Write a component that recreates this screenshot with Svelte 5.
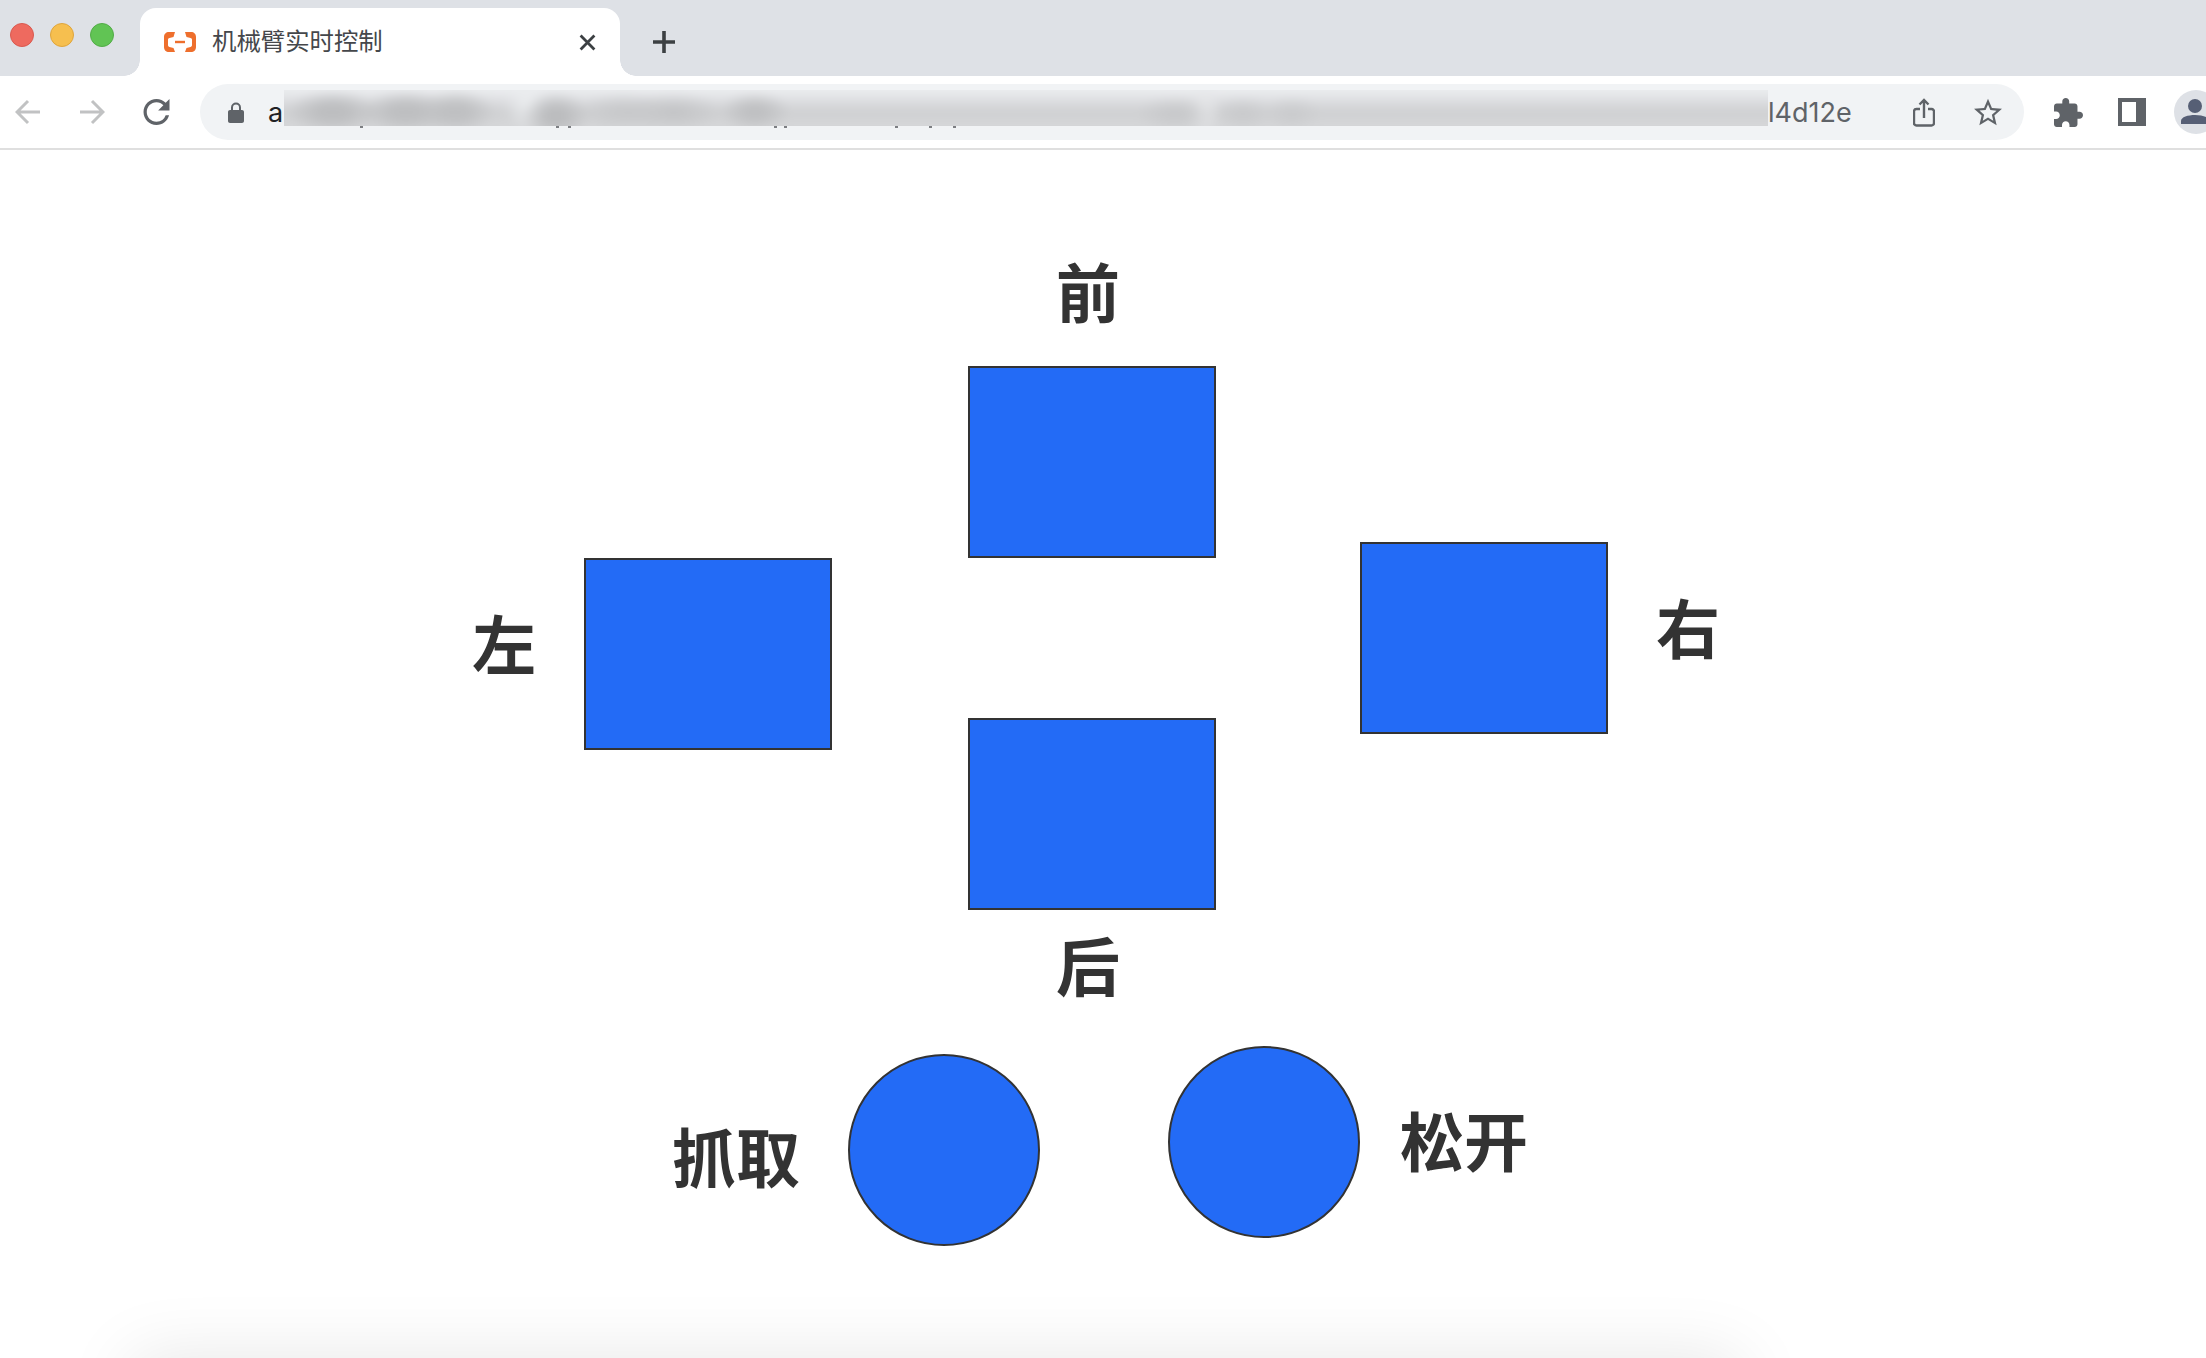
<script>
	// bits of the hidden url that stick out under the blurred strip
	const descenders = [76, 272, 284, 490, 500, 611, 645, 669];
</script>

<div class="page">
	<header class="tabstrip">
		<div class="dots">
			<span class="dot red"></span>
			<span class="dot yellow"></span>
			<span class="dot green"></span>
		</div>
		<div class="tab">
			<svg class="favicon" viewBox="0 0 32 20" aria-hidden="true">
				<path d="M11 0H5C2 0 0 2 0 5v10c0 3 2 5 5 5h6l-1.500-4-4-1c-.8-.2-1.500-.8-1.500-1.700V7.700C4 6.800 4.700 6.200 5.500 6l4-1z" />
				<path d="M21 0h6c3 0 5 2 5 5v10c0 3-2 5-5 5h-6l1.500-4 4-1c.8-.2 1.500-.8 1.500-1.700V7.700c0-.9-.7-1.500-1.500-1.700l-4-1z" />
				<rect x="11" y="8.800" width="10" height="2.400" />
			</svg>
			<span class="title">机械臂实时控制</span>
			<svg class="close" viewBox="0 0 16 16" aria-hidden="true">
				<path d="M1.500 1.500l13 13M14.500 1.500l-13 13" />
			</svg>
		</div>
		<svg class="plus" viewBox="0 0 24 24" aria-hidden="true">
			<path d="M12 1v22M1 12h22" />
		</svg>
	</header>

	<nav class="toolbar">
		<svg class="arrow" viewBox="0 0 26 26" aria-hidden="true"><path d="M25 13H2M13 2L2 13l11 11" /></svg>
		<svg class="arrow" viewBox="0 0 26 26" aria-hidden="true"><path d="M1 13h23M13 2l11 11-11 11" /></svg>
		<svg class="reload" viewBox="4 4 16 16" aria-hidden="true">
			<path d="M17.650 6.350A7.958 7.958 0 0 0 12 4c-4.420 0-7.990 3.580-7.990 8s3.570 8 7.990 8c3.730 0 6.840-2.550 7.730-6h-2.080A5.990 5.990 0 0 1 12 18c-3.310 0-6-2.690-6-6s2.690-6 6-6c1.660 0 3.140.690 4.220 1.780L13 11h7V4l-2.350 2.350z" />
		</svg>

		<div class="omnibox">
			<svg class="lock" viewBox="0 0 16 21" aria-hidden="true">
				<path d="M2 8h1V5.500a5 5 0 0 1 10 0V8h1c1.100 0 2 .9 2 2v9c0 1.100-.9 2-2 2H2c-1.100 0-2-.9-2-2v-9c0-1.100.9-2 2-2zm3 0h6V5.500a3 3 0 0 0-6 0z" fill-rule="evenodd" />
			</svg>
			<span class="scheme">a</span>
			<div class="blurred">
				<div class="smudge"></div>
				{#each descenders as left}
					<i class="descender" style="left: {left}px"></i>
				{/each}
			</div>
			<span class="url-end">l4d12e</span>
			<svg class="share" viewBox="0 0 22 29" aria-hidden="true">
				<path d="M7 11H3.500A2.500 2.500 0 0 0 1 13.500v11A2.500 2.500 0 0 0 3.500 27.500h15a2.500 2.500 0 0 0 2.500-2.500v-11A2.500 2.500 0 0 0 18.500 11H15M11 20V2M6.500 6.500L11 2l4.500 4.500" />
			</svg>
			<svg class="star" viewBox="2 2 20 19" aria-hidden="true">
				<path d="M22 9.240l-7.190-.62L12 2 9.190 8.630 2 9.240l5.460 4.730L5.820 21 12 17.270 18.180 21l-1.630-7.030L22 9.240zM12 15.400l-3.760 2.270 1-4.280-3.320-2.880 4.380-.38L12 6.100l1.710 4.040 4.380.38-3.320 2.880 1 4.280L12 15.400z" />
			</svg>
		</div>

		<svg class="puzzle" viewBox="2 1 21 21" aria-hidden="true">
			<path d="M20.500 11H19V7c0-1.100-.9-2-2-2h-4V3.500C13 2.120 11.880 1 10.500 1S8 2.120 8 3.500V5H4c-1.100 0-1.990.9-1.990 2v3.800H3.500c1.490 0 2.700 1.210 2.700 2.700s-1.210 2.700-2.700 2.700H2V20c0 1.100.9 2 2 2h3.800v-1.500c0-1.490 1.210-2.700 2.700-2.700 1.490 0 2.700 1.210 2.700 2.700V22H17c1.100 0 2-.9 2-2v-4h1.500c1.380 0 2.500-1.120 2.500-2.500S21.880 11 20.500 11z" />
		</svg>
		<div class="sidepanel"></div>
		<div class="avatar">
			<svg viewBox="0 0 44 44" aria-hidden="true">
				<circle cx="21" cy="16" r="7" />
				<path d="M7 34v-3c0-4 7-6 14-6s14 2 14 6v3z" />
			</svg>
		</div>
	</nav>

	<main class="stage">
		<div class="cross">
			<div class="side left">
				<span class="label">左</span>
				<button class="pad" aria-label="左"></button>
			</div>
			<div class="middle">
				<span class="label front">前</span>
				<button class="pad" aria-label="前"></button>
				<button class="pad back-pad" aria-label="后"></button>
				<span class="label back">后</span>
			</div>
			<div class="side right">
				<button class="pad" aria-label="右"></button>
				<span class="label">右</span>
			</div>
		</div>

		<div class="grips">
			<div class="grip grab">
				<span class="label">抓取</span>
				<button class="round" aria-label="抓取"></button>
			</div>
			<div class="grip release">
				<button class="round" aria-label="松开"></button>
				<span class="label">松开</span>
			</div>
		</div>

		<div class="glow"></div>
	</main>
</div>

<style>
	:global(body) {
		margin: 0;
		background: #fff;
	}
	.page {
		width: 2206px;
		height: 1358px;
		overflow: hidden;
		font-family: 'Inter', 'Noto Sans CJK SC', sans-serif;
	}

	/* browser chrome */
	.tabstrip {
		display: flex;
		align-items: flex-start;
		height: 76px;
		padding-left: 10px;
		background: #dee1e6;
		box-sizing: border-box;
	}
	.dots {
		display: flex;
		gap: 16px;
		margin-top: 23px;
	}
	.dot {
		width: 24px;
		height: 24px;
		border-radius: 50%;
		box-sizing: border-box;
		border: 1px solid;
	}
	.red {
		background: #ee6a5f;
		border-color: #d9594f;
	}
	.yellow {
		background: #f6bf4f;
		border-color: #dfa53c;
	}
	.green {
		background: #61c454;
		border-color: #52ac47;
	}
	.tab {
		position: relative;
		display: flex;
		align-items: center;
		width: 480px;
		height: 68px;
		margin: 8px 0 0 26px;
		padding: 0 24px;
		box-sizing: border-box;
		background: #fff;
		border-radius: 16px 16px 0 0;
	}
	.tab::before,
	.tab::after {
		content: '';
		position: absolute;
		bottom: 0;
		width: 16px;
		height: 16px;
	}
	.tab::before {
		left: -16px;
		background: radial-gradient(circle at 0 0, transparent 15.500px, #fff 16px);
	}
	.tab::after {
		right: -16px;
		background: radial-gradient(circle at 100% 0, transparent 15.500px, #fff 16px);
	}
	.favicon {
		width: 32px;
		height: 20px;
		fill: #ee6f2d;
	}
	.title {
		margin: 0 0 4px 16px;
		font-family: 'Noto Sans CJK SC', sans-serif;
		font-size: 24.400px;
		line-height: 32px;
		color: #45474b;
	}
	.close {
		width: 17px;
		height: 17px;
		margin-left: auto;
		fill: none;
		stroke: #3c4043;
		stroke-width: 2.600;
	}
	.plus {
		width: 24px;
		height: 24px;
		margin: 30px 0 0 32px;
		fill: none;
		stroke: #3c4043;
		stroke-width: 3.600;
	}
	.toolbar {
		display: flex;
		align-items: center;
		height: 74px;
		padding-left: 15px;
		box-sizing: border-box;
		border-bottom: 2px solid #dfdfdf;
		background: #fff;
	}
	.arrow {
		flex: none;
		width: 26px;
		height: 26px;
		margin-right: 38px;
		fill: none;
		stroke: #c1c2c3;
		stroke-width: 3;
	}
	.reload {
		flex: none;
		width: 27px;
		height: 26px;
		fill: #5f6368;
	}
	.omnibox {
		flex: none;
		display: flex;
		align-items: center;
		width: 1824px;
		height: 56px;
		margin: 0 30px;
		padding: 0 22px 0 28px;
		box-sizing: border-box;
		border-radius: 28px;
		background: #f1f3f5;
	}
	.lock {
		flex: none;
		width: 16px;
		height: 21px;
		fill: #5f6368;
	}
	.scheme {
		width: 16px;
		margin-left: 24px;
		font-size: 27px;
		color: #202124;
	}
	.blurred {
		position: relative;
		flex: none;
		width: 1484px;
		height: 36px;
		margin-bottom: 8px;
	}
	.smudge {
		position: relative;
		height: 36px;
		overflow: hidden;
	}
	.smudge::before {
		content: '';
		position: absolute;
		inset: -10px;
		filter: blur(4px);
		background:
			radial-gradient(ellipse 48px 22px at 59px 32px, #bdbec0, #bdbec0 30%, transparent),
			radial-gradient(ellipse 48px 22px at 132px 32px, #bebfc1, #bebfc1 30%, transparent),
			radial-gradient(ellipse 40px 22px at 182px 32px, #bfc0c2, #bfc0c2 30%, transparent),
			radial-gradient(ellipse 34px 24px at 282px 36px, #bbbcbe, #bbbcbe 25%, transparent),
			radial-gradient(ellipse 50px 20px at 350px 32px, #c6c7c9, transparent),
			radial-gradient(ellipse 50px 20px at 400px 32px, #c2c3c5, transparent),
			radial-gradient(ellipse 36px 20px at 481px 32px, #bfc0c2, #bfc0c2 25%, transparent),
			radial-gradient(ellipse 40px 18px at 901px 34px, #c6c7c9, transparent),
			radial-gradient(ellipse 30px 18px at 969px 34px, #c8c9cb, transparent),
			radial-gradient(ellipse 30px 18px at 1018px 34px, #c9cacc, transparent),
			radial-gradient(ellipse 24px 30px at 253px 22px, #ebedef, transparent),
			radial-gradient(ellipse 18px 30px at 930px 28px, #e6e7e9, transparent),
			linear-gradient(#eceef0 18%, #dddee1 37%, #cfd0d2 57%, #d6d7d9 82%);
	}
	.descender {
		position: absolute;
		top: 36px;
		width: 3px;
		height: 2px;
		background: #7c7e82;
	}
	.url-end {
		font-size: 27px;
		color: #5f6368;
	}
	.share {
		flex: none;
		width: 22px;
		height: 29px;
		margin-left: auto;
		fill: none;
		stroke: #5f6368;
		stroke-width: 2.400;
	}
	.star {
		flex: none;
		width: 28px;
		height: 28px;
		margin-left: 39px;
		fill: #5f6368;
	}
	.puzzle {
		flex: none;
		width: 29px;
		height: 29px;
		fill: #5f6368;
	}
	.sidepanel {
		flex: none;
		width: 28px;
		height: 28px;
		margin-left: 35px;
		box-sizing: border-box;
		border: solid #5f6368;
		border-width: 4px 10px 4px 4px;
	}
	.avatar {
		flex: none;
		width: 44px;
		height: 44px;
		margin-left: 28px;
		border-radius: 50%;
		background: #dee1e6;
	}
	.avatar svg {
		display: block;
		width: 44px;
		height: 44px;
		fill: #565f75;
	}

	/* control pad */
	.label {
		flex: none;
		font-family: 'Noto Sans CJK SC', sans-serif;
		font-size: 64px;
		font-weight: 700;
		line-height: 60px;
		color: #333;
	}
	.pad {
		display: block;
		flex: none;
		width: 248px;
		height: 192px;
		padding: 0;
		box-sizing: border-box;
		background: #236bf6;
		border: 2px solid #333;
	}
	.round {
		display: block;
		flex: none;
		width: 192px;
		height: 192px;
		padding: 0;
		box-sizing: border-box;
		background: #236bf6;
		border: 2px solid #333;
		border-radius: 50%;
	}
	.cross {
		display: flex;
		align-items: flex-start;
		padding-left: 472px;
	}
	.side {
		display: flex;
		align-items: center;
		gap: 48px;
	}
	.side .label {
		margin-bottom: 26px;
	}
	.left {
		margin-top: 408px;
	}
	.right {
		margin: 392px 0 0 144px;
	}
	.middle {
		display: flex;
		flex-direction: column;
		padding-top: 109px;
		margin-left: 136px;
	}
	.front {
		margin: 0 0 47px 88px;
	}
	.back-pad {
		margin-top: 160px;
	}
	.back {
		margin: 23px 0 0 88px;
	}
	.grips {
		display: flex;
		align-items: flex-start;
		padding-left: 672px;
	}
	.grip {
		display: flex;
		align-items: center;
	}
	.grab {
		gap: 48px;
		margin-top: 61px;
	}
	.grab .label {
		margin-top: 8px;
	}
	.release {
		gap: 40px;
		margin: 53px 0 0 128px;
	}
	.release .label {
		margin-bottom: 8px;
	}
	.glow {
		width: 1608px;
		height: 200px;
		margin: 112px 0 0 132px;
		background: #f3f3f3;
		box-shadow: 0 0 70px rgba(0, 0, 0, 0.1);
	}
</style>
